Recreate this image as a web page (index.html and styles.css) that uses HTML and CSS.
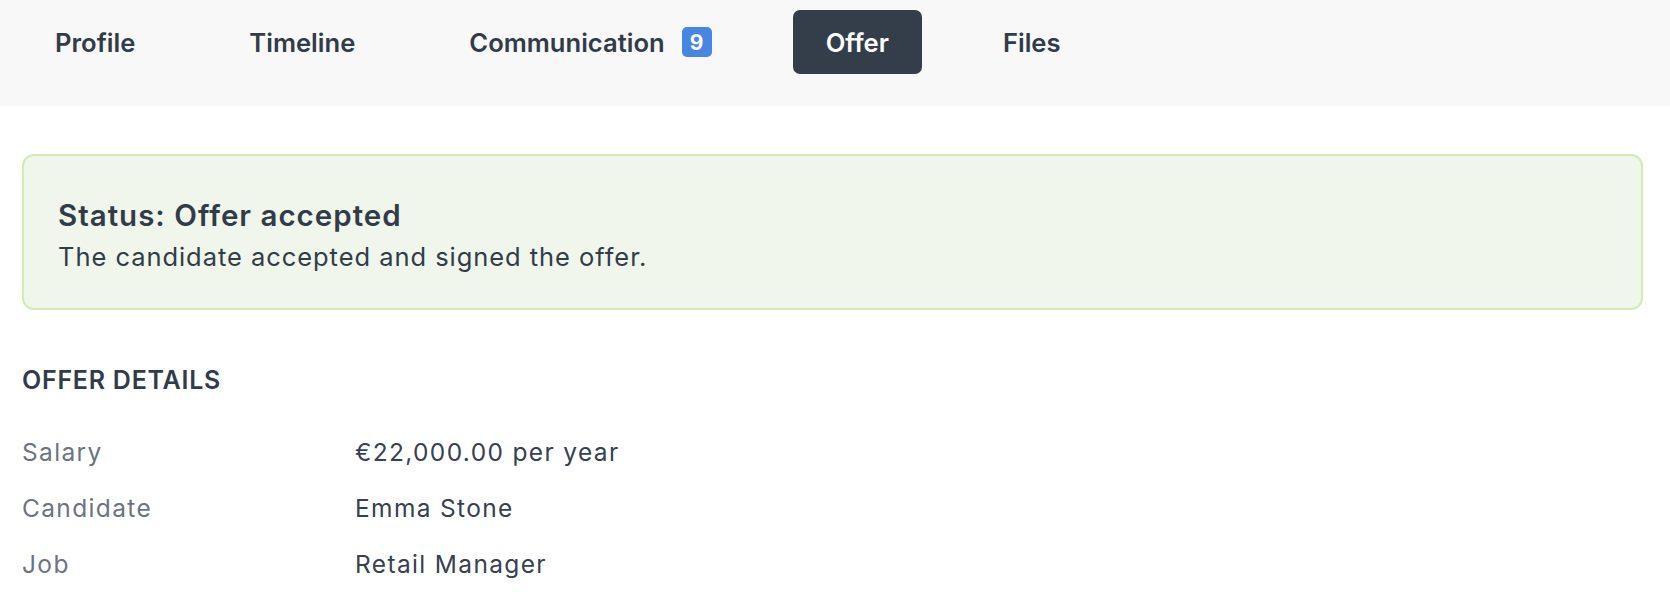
FILE: index.html
```html
<!DOCTYPE html>
<html lang="en">
<head>
  <meta charset="UTF-8" />
  <meta name="viewport" content="width=device-width, initial-scale=1.0"/>
  <title>Candidate Offer</title>
  <link rel="stylesheet" href="styles.css">
</head>
<body>
  <nav class="tabs">
    <a class="tab" href="#">Profile</a>
    <a class="tab" href="#">Timeline</a>
    <a class="tab" href="#">Communication <span class="badge">9</span></a>
    <a class="tab active" href="#">Offer</a>
    <a class="tab" href="#">Files</a>
  </nav>

  <main class="content">
    <div class="status">
      <h2>Status: Offer accepted</h2>
      <p>The candidate accepted and signed the offer.</p>
    </div>

    <h3 class="section-title">Offer details</h3>

    <dl class="details">
      <dt>Salary</dt>
      <dd>€22,000.00 per year</dd>
      <dt>Candidate</dt>
      <dd>Emma Stone</dd>
      <dt>Job</dt>
      <dd>Retail Manager</dd>
    </dl>
  </main>
</body>
</html>
```

FILE: styles.css
```css
body {
  margin: 0;
  font-family: Inter, "Noto Sans", sans-serif;
  color: #323c49;
  background: #fff;
}

.tabs {
  display: flex;
  gap: 48px;
  padding: 10px 22px 32px;
  background-color: #f8f8f8;
}

.tab {
  display: flex;
  align-items: center;
  height: 64px;
  padding: 0 33px;
  border-radius: 7px;
  font-size: 25.6px;
  font-weight: 600;
  color: #323c49;
  text-decoration: none;
}

.tab.active {
  background-color: #343e4a;
  color: #fff;
}

.badge {
  display: inline-flex;
  align-items: center;
  justify-content: center;
  width: 30px;
  height: 30px;
  margin-left: 17px;
  border-radius: 5px;
  background-color: #4787e2;
  color: #fff;
  font-size: 21px;
  font-weight: 700;
}

.content {
  padding: 48px 27px 0 22px;
}

.status {
  padding: 39px 34px 31px;
  border: 2px solid #d3ebb3;
  border-radius: 12px;
  background-color: #f0f6ec;
}

.status h2 {
  margin: 0;
  font-size: 29.5px;
  line-height: 41px;
  font-weight: 600;
  letter-spacing: 1px;
}

.status p {
  margin: 0;
  font-size: 25.5px;
  line-height: 41px;
  letter-spacing: 0.95px;
}

.section-title {
  margin: 55px 0 0;
  font-size: 25px;
  line-height: 30px;
  font-weight: 600;
  letter-spacing: 0.75px;
  text-transform: uppercase;
}

.details {
  display: grid;
  grid-template-columns: 333px 1fr;
  margin: 29px 0 0;
  font-size: 24.5px;
  line-height: 56px;
  letter-spacing: 1.35px;
}

.details dt {
  color: #6b7480;
}

.details dd {
  margin: 0;
  color: #374150;
}
```
